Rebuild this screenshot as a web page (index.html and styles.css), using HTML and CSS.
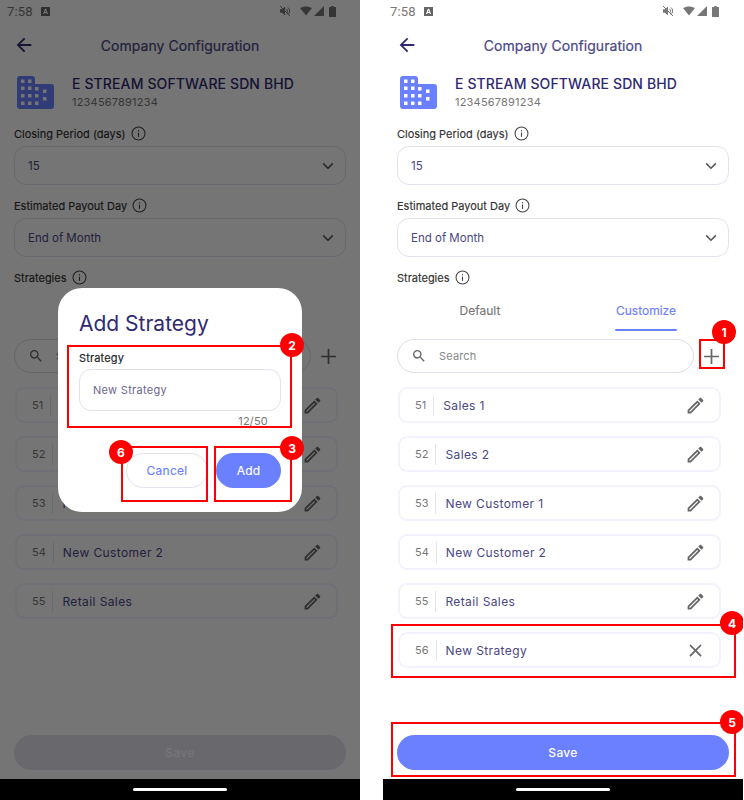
FILE: index.html
```html
<!DOCTYPE html>
<html>
<head>
<meta charset="utf-8">
<title>Company Configuration</title>
<link rel="stylesheet" href="styles.css">
</head>
<body>

<svg class="defs" width="0" height="0">
  <symbol id="i-back" viewBox="0 0 24 24"><path d="M20 11H7.83l5.59-5.59L12 4l-8 8 8 8 1.41-1.41L7.83 13H20v-2z"/></symbol>
  <symbol id="i-down" viewBox="0 0 24 24"><path d="M5.5 8.5L12 15l6.5-6.5" fill="none" stroke="currentColor" stroke-width="2"/></symbol>
  <symbol id="i-info" viewBox="0 0 16 16"><circle cx="8" cy="8" r="6.9" fill="none" stroke="currentColor" stroke-width="1.1"/><rect x="7.4" y="7" width="1.2" height="4.6"/><rect x="7.4" y="4.4" width="1.2" height="1.3"/></symbol>
  <symbol id="i-search" viewBox="0 0 24 24"><path d="M15.5 14h-.79l-.28-.27A6.47 6.47 0 0 0 16 9.5 6.5 6.5 0 1 0 9.5 16c1.61 0 3.09-.59 4.23-1.57l.27.28v.79l5 4.99L20.49 19l-4.99-5zm-6 0C7.01 14 5 11.99 5 9.5S7.01 5 9.5 5 14 7.01 14 9.5 11.99 14 9.5 14z"/></symbol>
  <symbol id="i-plus" viewBox="0 0 16 16"><path d="M7.2 1h1.6v6.2H15v1.6H8.800V15H7.200V8.800H1V7.200h6.200z"/></symbol>
  <symbol id="i-edit" viewBox="0 0 24 24"><path d="M3 17.250V21h3.750L17.810 9.940l-3.750-3.750L3 17.250zM5.920 19H5v-.92l9.060-9.060.92.92L5.920 19zM20.710 5.630l-2.340-2.340c-.2-.2-.45-.29-.71-.29s-.51.1-.7.29l-1.830 1.830 3.750 3.750 1.830-1.830c.39-.39.39-1.020 0-1.410z"/></symbol>
  <symbol id="i-close" viewBox="0 0 24 24"><path d="M19 6.410L17.590 5 12 10.590 6.410 5 5 6.410 10.590 12 5 17.590 6.410 19 12 13.410 17.590 19 19 17.590 13.410 12z"/></symbol>
  <symbol id="i-building" viewBox="0 0 37 33">
    <path d="M3 0h12a3 3 0 0 1 3 3v5h16a3 3 0 0 1 3 3v19a3 3 0 0 1-3 3H3a3 3 0 0 1-3-3V3a3 3 0 0 1 3-3z"/>
    <g fill="#fff">
      <rect x="4" y="3.500" width="3.500" height="3.500"/><rect x="11" y="3.500" width="3.500" height="3.500"/>
      <rect x="4" y="10.500" width="3.500" height="3.500"/><rect x="11" y="10.500" width="3.500" height="3.500"/>
      <rect x="4" y="18" width="3.500" height="3.500"/><rect x="11" y="18" width="3.500" height="3.500"/>
      <rect x="4" y="25.500" width="3.500" height="3.500"/><rect x="11" y="25.500" width="3.500" height="3.500"/>
      <rect x="18" y="11" width="3.500" height="3.500"/><rect x="18" y="18" width="3.500" height="3.500"/><rect x="18" y="25.500" width="3.500" height="3.500"/>
      <rect x="26" y="13.500" width="3.500" height="3.500"/><rect x="26" y="21" width="3.500" height="3.500"/>
    </g>
  </symbol>
  <symbol id="i-a" viewBox="0 0 9 9"><path d="M0 0h9v9H0zM3.900 1.800L2 7h1.200l.35-1.100h1.900L5.800 7H7L5.100 1.800zM4.500 3.200l.65 1.800h-1.300z" fill-rule="evenodd"/></symbol>
  <symbol id="i-mute" viewBox="0 0 12 12"><path d="M1 4.200h2L6 1.500v9L3 7.800H1z"/><path d="M7.500 3.800c1.200.8 1.200 3.600 0 4.400M9 2.500c2 1.500 2 5.500 0 7M1 1l10 10" fill="none" stroke="currentColor" stroke-width="1"/></symbol>
  <symbol id="i-wifi" viewBox="0 0 13 10"><path d="M0 1.800C3.800-.6 9.200-.6 13 1.800L6.500 10z"/></symbol>
  <symbol id="i-signal" viewBox="0 0 10 10"><path d="M10 0v10H0z"/></symbol>
  <symbol id="i-battery" viewBox="0 0 7 11"><path d="M2.300 0h2.400v1H6.500a.5.500 0 0 1 .5.500v9a.5.500 0 0 1-.5.500h-6a.5.500 0 0 1-.5-.500v-9A.5.500 0 0 1 .5 1h1.800z"/></symbol>
</svg>

<div class="screens">

  <!-- left phone: dialog open -->
  <div class="phone">
    <div class="status">
      <span class="time">7:58</span>
      <svg class="ic-a"><use href="#i-a"/></svg>
      <span class="status-right">
        <svg class="ic-mute"><use href="#i-mute"/></svg>
        <svg class="ic-wifi"><use href="#i-wifi"/></svg>
        <svg class="ic-signal"><use href="#i-signal"/></svg>
        <svg class="ic-battery"><use href="#i-battery"/></svg>
      </span>
    </div>
    <div class="header">
      <svg class="ic-back"><use href="#i-back"/></svg>
      <span class="header-title">Company Configuration</span>
    </div>
    <div class="company">
      <svg class="ic-building"><use href="#i-building"/></svg>
      <div>
        <div class="company-name">E STREAM SOFTWARE SDN BHD</div>
        <div class="company-no">1234567891234</div>
      </div>
    </div>
    <div class="label">Closing Period (days) <svg class="ic-info"><use href="#i-info"/></svg></div>
    <div class="select">15 <svg class="ic-down"><use href="#i-down"/></svg></div>
    <div class="label">Estimated Payout Day <svg class="ic-info"><use href="#i-info"/></svg></div>
    <div class="select">End of Month <svg class="ic-down"><use href="#i-down"/></svg></div>
    <div class="label">Strategies <svg class="ic-info"><use href="#i-info"/></svg></div>
    <div class="tabs">
      <span class="tab">Default</span>
      <span class="tab tab-on">Customize</span>
    </div>
    <div class="search-row">
      <div class="search">
        <svg class="ic-search"><use href="#i-search"/></svg>
        <span>Search</span>
      </div>
      <svg class="ic-plus"><use href="#i-plus"/></svg>
    </div>
    <div class="list">
      <div class="row"><span class="num">51</span><span class="name">Sales 1</span><svg class="ic-edit"><use href="#i-edit"/></svg></div>
      <div class="row"><span class="num">52</span><span class="name">Sales 2</span><svg class="ic-edit"><use href="#i-edit"/></svg></div>
      <div class="row"><span class="num">53</span><span class="name">New Customer 1</span><svg class="ic-edit"><use href="#i-edit"/></svg></div>
      <div class="row"><span class="num">54</span><span class="name">New Customer 2</span><svg class="ic-edit"><use href="#i-edit"/></svg></div>
      <div class="row"><span class="num">55</span><span class="name">Retail Sales</span><svg class="ic-edit"><use href="#i-edit"/></svg></div>
    </div>
    <div class="save-wrap"><div class="save save-off">Save</div></div>
    <div class="navbar"><span class="home"></span></div>

    <div class="overlay"></div>
    <div class="dialog">
      <div class="dialog-title">Add Strategy</div>
      <div class="dialog-label">Strategy</div>
      <div class="dialog-input">New Strategy</div>
      <div class="counter">12/50</div>
      <div class="dialog-btns">
        <span class="btn btn-cancel">Cancel</span>
        <span class="btn btn-add">Add</span>
      </div>
    </div>

    <div class="mark mark-2"></div><span class="badge badge-2">2</span>
    <div class="mark mark-3"></div><span class="badge badge-3">3</span>
    <div class="mark mark-6"></div><span class="badge badge-6">6</span>
  </div>

  <!-- right phone: strategy added -->
  <div class="phone">
    <div class="status">
      <span class="time">7:58</span>
      <svg class="ic-a"><use href="#i-a"/></svg>
      <span class="status-right">
        <svg class="ic-mute"><use href="#i-mute"/></svg>
        <svg class="ic-wifi"><use href="#i-wifi"/></svg>
        <svg class="ic-signal"><use href="#i-signal"/></svg>
        <svg class="ic-battery"><use href="#i-battery"/></svg>
      </span>
    </div>
    <div class="header">
      <svg class="ic-back"><use href="#i-back"/></svg>
      <span class="header-title">Company Configuration</span>
    </div>
    <div class="company">
      <svg class="ic-building"><use href="#i-building"/></svg>
      <div>
        <div class="company-name">E STREAM SOFTWARE SDN BHD</div>
        <div class="company-no">1234567891234</div>
      </div>
    </div>
    <div class="label">Closing Period (days) <svg class="ic-info"><use href="#i-info"/></svg></div>
    <div class="select">15 <svg class="ic-down"><use href="#i-down"/></svg></div>
    <div class="label">Estimated Payout Day <svg class="ic-info"><use href="#i-info"/></svg></div>
    <div class="select">End of Month <svg class="ic-down"><use href="#i-down"/></svg></div>
    <div class="label">Strategies <svg class="ic-info"><use href="#i-info"/></svg></div>
    <div class="tabs">
      <span class="tab">Default</span>
      <span class="tab tab-on">Customize</span>
    </div>
    <div class="search-row">
      <div class="search">
        <svg class="ic-search"><use href="#i-search"/></svg>
        <span>Search</span>
      </div>
      <svg class="ic-plus"><use href="#i-plus"/></svg>
    </div>
    <div class="list">
      <div class="row"><span class="num">51</span><span class="name">Sales 1</span><svg class="ic-edit"><use href="#i-edit"/></svg></div>
      <div class="row"><span class="num">52</span><span class="name">Sales 2</span><svg class="ic-edit"><use href="#i-edit"/></svg></div>
      <div class="row"><span class="num">53</span><span class="name">New Customer 1</span><svg class="ic-edit"><use href="#i-edit"/></svg></div>
      <div class="row"><span class="num">54</span><span class="name">New Customer 2</span><svg class="ic-edit"><use href="#i-edit"/></svg></div>
      <div class="row"><span class="num">55</span><span class="name">Retail Sales</span><svg class="ic-edit"><use href="#i-edit"/></svg></div>
      <div class="row"><span class="num">56</span><span class="name">New Strategy</span><svg class="ic-edit"><use href="#i-close"/></svg></div>
    </div>
    <div class="save-wrap"><div class="save">Save</div></div>
    <div class="navbar"><span class="home"></span></div>

    <div class="mark mark-1"></div><span class="badge badge-1">1</span>
    <div class="mark mark-4"></div><span class="badge badge-4">4</span>
    <div class="mark mark-5"></div><span class="badge badge-5">5</span>
  </div>

</div>
</body>
</html>
```

FILE: styles.css
```css
html, body { margin: 0; padding: 0; background: #fff; }
body { font-family: Inter, "Liberation Sans", sans-serif; overflow: hidden; }
.defs { position: absolute; }
svg { fill: currentColor; display: block; }

.screens { display: flex; gap: 23px; width: 744px; height: 800px; }

.phone {
  position: relative;
  width: 360px;
  height: 800px;
  flex: none;
  display: flex;
  flex-direction: column;
  background: #fff;
  overflow: hidden;
}

/* status bar */
.status { height: 22px; display: flex; align-items: center; padding: 0 24px 0 7px; color: #777; }
.time { font-family: Roboto, sans-serif; font-size: 13px; letter-spacing: .2px; width: 27px; }
.ic-a { width: 9px; height: 9px; margin-left: 7px; color: #666; }
.status-right { margin-left: auto; display: flex; align-items: center; }
.ic-mute { width: 12px; height: 12px; margin-right: 9px; }
.ic-wifi { width: 12px; height: 10px; }
.ic-signal { width: 10px; height: 10px; margin-left: 2px; }
.ic-battery { width: 7px; height: 11px; margin-left: 5px; }

/* header */
.header { height: 24px; margin-top: 11px; position: relative; display: flex; align-items: center; justify-content: center; }
.ic-back { position: absolute; left: 13px; top: 1px; width: 22px; height: 22px; color: #2f2a72; }
.header-title { font-size: 14px; color: #4a4785; letter-spacing: .06px; -webkit-text-stroke: .2px #4a4785; }

/* company */
.company { display: flex; align-items: center; gap: 18px; padding: 17px 0 0 17px; height: 36px; }
.ic-building { width: 37px; height: 33px; color: #6b80ff; flex: none; }
.company-name { margin-top: 2px; font-size: 14px; font-weight: 500; color: #2f2a72; letter-spacing: .12px; line-height: 18px; }
.company-no { font-size: 11px; color: #777; letter-spacing: .2px; line-height: 18px; }

/* form */
.label { display: flex; align-items: center; gap: 5px; height: 16px; margin: 0 14px; font-size: 11px; color: #333; -webkit-text-stroke: .15px #333; }
.company + .label { margin-top: 16px; }
.ic-info { width: 15px; height: 15px; color: #444; margin-top: -2px; }
.select {
  display: flex;
  align-items: center;
  justify-content: space-between;
  height: 39px;
  box-sizing: border-box;
  margin: 4px 14px 13px;
  padding: 0 8px 0 13px;
  border: 1px solid #e2e1f0;
  border-radius: 12px;
  font-size: 11.5px;
  color: #4a4785;
}
.ic-down { width: 18px; height: 18px; color: #555; }

/* tabs */
.tabs { display: flex; height: 37px; margin: 8px 14px 0; }
.tab { flex: 1; text-align: center; padding-top: 9px; font-size: 12px; color: #777; -webkit-text-stroke: .15px; }
.tab-on { color: #6b80ff; position: relative; }
.tab-on::after { content: ""; position: absolute; left: 50%; bottom: 0; margin-left: -31px; width: 62px; height: 2px; border-radius: 1px; background: #6b80ff; }

/* search */
.search-row { display: flex; align-items: center; margin: 8px 14px 0; height: 34px; }
.search { width: 297px; height: 34px; box-sizing: border-box; display: flex; align-items: center; gap: 12px; padding-left: 13px; border: 1px solid #dedde8; border-radius: 17px; font-size: 11px; color: #888; letter-spacing: .15px; }
.ic-search { width: 16px; height: 16px; color: #666; }
.ic-plus { width: 17px; height: 17px; margin-left: 9px; color: #666; }

/* list */
.list { display: flex; flex-direction: column; gap: 13px; margin: 14px 22px 0 15px; }
.row { display: flex; align-items: center; height: 36px; box-sizing: border-box; padding: 0 13px 0 15px; border: 2px solid #f2f2ff; border-radius: 9px; }
.num { font-size: 11px; color: #777; padding-right: 7px; line-height: 21px; border-right: 1px solid #e4e4ee; }
.name { margin-left: 9px; flex: 1; font-size: 12px; color: #4a4785; letter-spacing: .4px; }
.ic-edit { width: 21px; height: 21px; color: #666; }

/* save */
.save-wrap { margin-top: auto; padding: 0 14px 9px; }
.save { height: 35px; border-radius: 18px; background: #6b80ff; color: #fff; font-size: 12px; font-weight: 500; display: flex; align-items: center; justify-content: center; letter-spacing: .3px; }
.save-off { background: #e4e4ee; color: #fff; }

.navbar { height: 21px; background: #000; display: flex; align-items: center; justify-content: center; flex: none; position: relative; z-index: 1; }
.home { width: 94px; height: 3px; border-radius: 2px; background: #fff; }

/* dialog */
.overlay { position: absolute; left: 0; right: 0; top: 0; bottom: 21px; background: rgba(0, 0, 0, .54); }
.dialog { position: absolute; left: 58px; top: 288px; width: 244px; height: 224px; box-sizing: border-box; padding: 22px 21px 0; background: #fff; border-radius: 24px; }
.dialog-title { font-size: 21px; line-height: 28px; color: #2f2a72; }
.dialog-label { margin-top: 13px; font-size: 11px; line-height: 14px; color: #222; -webkit-text-stroke: .15px; letter-spacing: .15px; }
.dialog-input { margin-top: 4px; height: 42px; box-sizing: border-box; padding-left: 13px; display: flex; align-items: center; border: 1px solid #e2e1f0; border-radius: 12px; font-size: 11px; color: #6b6890; letter-spacing: .3px; }
.counter { margin: 3px 13px 0 0; text-align: right; font-size: 11px; line-height: 14px; color: #777; letter-spacing: .2px; }
.dialog-btns { display: flex; justify-content: flex-end; gap: 8px; margin-top: 25px; }
.btn { height: 35px; box-sizing: border-box; display: flex; align-items: center; justify-content: center; border-radius: 18px; font-size: 12px; letter-spacing: .25px; -webkit-text-stroke: .15px; }
.btn-cancel { width: 82px; border: 1px solid #e2e1f0; color: #6b80ff; }
.btn-add { width: 65px; background: #6b80ff; color: #fff; }

/* tutorial marks */
.mark { position: absolute; box-sizing: border-box; border: 2px solid #f00; }
.badge { position: absolute; width: 24px; height: 24px; border-radius: 50%; background: #f00; color: #fff; font-size: 12px; font-weight: 700; display: flex; align-items: center; justify-content: center; }
.mark-2 { left: 67px; top: 345px; width: 225px; height: 83px; }
.mark-3 { left: 214px; top: 446px; width: 78px; height: 56px; }
.mark-6 { left: 121px; top: 446px; width: 87px; height: 56px; }
.badge-2 { left: 280px; top: 333px; }
.badge-3 { left: 280px; top: 436px; }
.badge-6 { left: 109px; top: 440px; }
.mark-1 { left: 316px; top: 339px; width: 26px; height: 30px; }
.mark-4 { left: 8px; top: 624px; width: 345px; height: 54px; }
.mark-5 { left: 8px; top: 722px; width: 345px; height: 55px; }
.badge-1 { left: 329px; top: 320px; }
.badge-4 { left: 337px; top: 611px; }
.badge-5 { left: 337px; top: 710px; }
```
